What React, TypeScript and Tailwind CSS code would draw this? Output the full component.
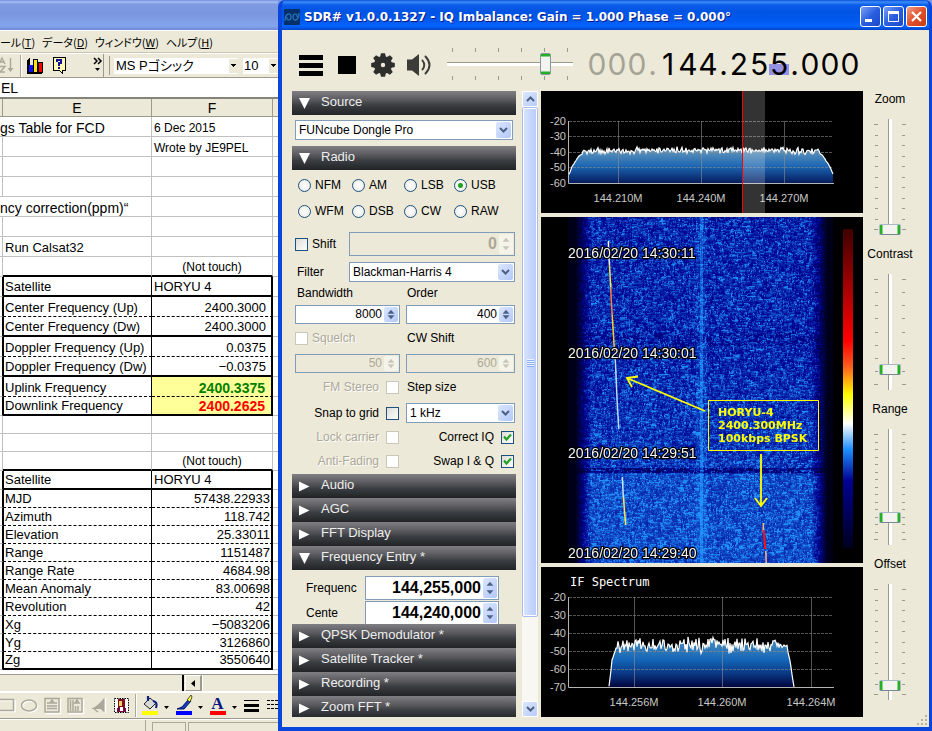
import { useEffect, useRef } from "react";
import type { ReactNode } from "react";

/* ---------- shared helpers ---------- */

function makeRandom(seed: number) {
  let s = seed;
  return () => {
    s = (s * 1664525 + 1013904223) % 4294967296;
    return s / 4294967296;
  };
}

const uiFont = "font-['Liberation_Sans','Noto_Sans_CJK_JP',sans-serif]";

/* ---------- spreadsheet ---------- */

type Row = {
  h: "h20" | "h18" | "h19";
  spill?: string;
  e?: string;
  f?: string;
  fStyle?: string;
  box?: boolean;
  line: "gray" | "thick" | "dash";
};

const small = "text-[12px] pl-[2px]";
const right = "text-right pr-[5px]";
const rightEdge = "text-right pr-[1px]";

const rows: Row[] = [
  { h: "h20", spill: "gs Table for FCD", f: "6 Dec 2015", fStyle: small, line: "gray" },
  { h: "h20", f: "Wrote by JE9PEL", fStyle: small, line: "gray" },
  { h: "h20", line: "gray" },
  { h: "h20", line: "gray" },
  { h: "h20", spill: "ncy correction(ppm)“", line: "gray" },
  { h: "h20", line: "gray" },
  { h: "h20", e: "Run Calsat32", line: "gray" },
  { h: "h20", f: "(Not touch)", fStyle: "text-[12px] text-center", line: "thick" },
  { h: "h20", e: "Satellite", f: "HORYU 4", box: true, line: "thick" },
  { h: "h20", e: "Center Frequency (Up)", f: "2400.3000", fStyle: right, box: true, line: "dash" },
  { h: "h20", e: "Center Frequency (Dw)", f: "2400.3000", fStyle: right, box: true, line: "thick" },
  { h: "h20", e: "Doppler Frequency (Up)", f: "0.0375", fStyle: right, box: true, line: "dash" },
  { h: "h20", e: "Doppler Frequency (Dw)", f: "−0.0375", fStyle: right, box: true, line: "thick" },
  { h: "h20", e: "Uplink Frequency", f: "2400.3375", fStyle: "text-right pr-[6px] font-bold text-[14px] text-[#008000] bg-[#ffff99]", box: true, line: "dash" },
  { h: "h19", e: "Downlink Frequency", f: "2400.2625", fStyle: "text-right pr-[6px] font-bold text-[14px] text-[#ff0000] bg-[#ffff99]", box: true, line: "thick" },
  { h: "h18", line: "gray" },
  { h: "h18", line: "gray" },
  { h: "h19", f: "(Not touch)", fStyle: "text-[12px] text-center", line: "thick" },
  { h: "h19", e: "Satellite", f: "HORYU 4", box: true, line: "thick" },
  { h: "h18", e: "MJD", f: "57438.22933", fStyle: rightEdge, box: true, line: "dash" },
  { h: "h18", e: "Azimuth", f: "118.742", fStyle: rightEdge, box: true, line: "dash" },
  { h: "h18", e: "Elevation", f: "25.33011", fStyle: rightEdge, box: true, line: "dash" },
  { h: "h18", e: "Range", f: "1151487", fStyle: rightEdge, box: true, line: "dash" },
  { h: "h18", e: "Range Rate", f: "4684.98", fStyle: rightEdge, box: true, line: "dash" },
  { h: "h18", e: "Mean Anomaly", f: "83.00698", fStyle: rightEdge, box: true, line: "dash" },
  { h: "h18", e: "Revolution", f: "42", fStyle: rightEdge, box: true, line: "dash" },
  { h: "h18", e: "Xg", f: "−5083206", fStyle: rightEdge, box: true, line: "dash" },
  { h: "h18", e: "Yg", f: "3126860", fStyle: rightEdge, box: true, line: "dash" },
  { h: "h18", e: "Zg", f: "3550640", fStyle: rightEdge, box: true, line: "thick" },
];

const heights = { h20: "h-[20px]", h19: "h-[19px]", h18: "h-[18px]" };
const lines = {
  gray: "border-b border-b-[#c0c0c0]",
  thick: "border-b-2 border-b-black",
  dash: "border-b border-dashed border-b-black",
};

function Sheet() {
  return (
    <table className="w-full table-fixed border-separate border-spacing-0 bg-white text-[13px] leading-[16px] text-black">
      <colgroup>
        <col className="w-[3px]" />
        <col className="w-[149px]" />
        <col className="w-[121px]" />
        <col />
      </colgroup>
      <thead>
        <tr className="h-[18px] bg-[#ece9d8]">
          <th className="h-[18px] border-r border-b border-[#9c9a8c] p-0" />
          <th className="border-r border-b border-[#9c9a8c] p-0 text-[14px] font-normal">E</th>
          <th className="border-r border-b border-[#9c9a8c] p-0 text-[14px] font-normal">F</th>
          <th className="border-b border-[#9c9a8c] p-0" />
        </tr>
      </thead>
      <tbody>
        {rows.map((r, i) => (
          <tr key={i}>
            <td
              className={`border-b border-b-[#c0c0c0] p-0 align-bottom whitespace-nowrap ${heights[r.h]} ${
                r.spill ? "text-[14px]" : r.box ? "border-r border-r-black" : "border-r border-r-[#c0c0c0]"
              }`}
            >
              {r.spill}
            </td>
            <td
              className={`p-0 align-bottom whitespace-nowrap ${r.box ? "border-l border-l-black pl-px [border-left-style:solid]" : "pl-[2px]"} border-r [border-right-style:solid] ${
                r.box ? "border-r-black" : "border-r-[#c0c0c0]"
              } ${lines[r.line]}`}
            >
              {r.e}
            </td>
            <td
              className={`p-0 align-bottom whitespace-nowrap [border-right-style:solid] ${
                r.box ? "border-r-2 border-r-black" : "border-r border-r-[#c0c0c0]"
              } ${lines[r.line]} ${r.fStyle ?? "pl-[2px]"}`}
            >
              {r.f}
            </td>
            <td className="border-b border-b-[#c0c0c0] p-0" />
          </tr>
        ))}
      </tbody>
    </table>
  );
}

function DownArrow() {
  return (
    <svg width="7" height="4" viewBox="0 0 7 4" shapeRendering="crispEdges" aria-hidden>
      <path d="M1 0h5v1h-1v1h-1v1h-1v-1h-1v-1h-1z" />
    </svg>
  );
}

function Spreadsheet() {
  return (
    <section className="flex w-[278px] shrink-0 flex-col overflow-hidden bg-[#ece9d8]">
      <div className="h-[31px] shrink-0 border-b border-white bg-[linear-gradient(#6f8ee0_0px,#a9bff2_2px,#7f9ae3_4px,#7a96df_14px,#83a4ec_26px,#6e86d6_30px)]" />
      <nav className="flex h-[22px] shrink-0 items-center gap-[7px] border-b border-[#c8c5b2] text-[11px] leading-[20px] whitespace-nowrap [font-feature-settings:'palt'] font-['Noto_Sans_CJK_JP',sans-serif]">
        <button>ール(<u>T</u>)</button>
        <button>データ(<u>D</u>)</button>
        <button>ウィンドウ(<u>W</u>)</button>
        <button>ヘルプ(<u>H</u>)</button>
      </nav>
      <div className="flex h-[25px] shrink-0 items-center border-t border-b border-t-white border-b-[#9c9a8c] text-[13px]">
        <svg width="103" height="23" viewBox="0 0 103 23" aria-hidden>
          <g stroke="#aca899" fill="none" strokeWidth="1.4">
            <path d="M-1 10 2 4l3 6M0 8h4M0 12.500h5l-5 5.500h5" />
            <path d="M10.500 4v13" />
            <path d="M7.500 14h6l-3 4z" fill="#aca899" stroke="none" />
          </g>
          <path d="M20.500 1v22" stroke="#aca899" />
          <path d="M21.500 1v22" stroke="#fff" />
          <g shapeRendering="crispEdges">
            <path d="M27 6l3-3v15h13l-2 2H27z" fill="#000" />
            <path d="M29 11h4v7h-4z" fill="#1010ff" />
            <path d="M33 5h4v13h-4z" fill="#ffe800" stroke="#000" />
            <path d="M38 8h4v10h-4z" fill="#f00" stroke="#000" />
            <path d="M53 3h12v13h-3v3l-3-3h-6z" fill="#fffbb0" stroke="#000" />
            <path d="M57 8V6h4v3h-2v3M59 13v2" stroke="#1010a0" strokeWidth="2" fill="none" />
          </g>
          <path d="M94 4l3 3-3 3M98 4l3 3-3 3" stroke="#000" strokeWidth="1.500" fill="none" />
          <path d="M95 14h5l-2.500 3z" fill="#000" />
        </svg>
        <div className="h-full w-[6px] border-l border-[#9c9a8c]" />
        <div className="mr-[4px] h-[19px] w-px bg-[#9c9a8c]" />
        <label className="flex h-[16px] w-[124px] items-center bg-white pl-[2px]">
          <input aria-label="Font" defaultValue="MS Pゴシック" className="min-w-0 flex-1 leading-[14px] outline-none [font-feature-settings:'palt'] font-['Liberation_Sans','Noto_Sans_CJK_JP',sans-serif]" />
          <span className="flex h-[14px] w-[9px] items-center justify-center bg-[#ece9d8]"><DownArrow /></span>
        </label>
        <label className="ml-[5px] flex h-[16px] flex-1 items-center bg-white pl-[1px]">
          <input aria-label="Font size" defaultValue="10" className="w-0 min-w-0 flex-1 leading-[14px] outline-none" />
          <span className="flex h-[14px] w-[9px] items-center justify-center bg-[#ece9d8]"><DownArrow /></span>
        </label>
      </div>
      <input aria-label="Formula" defaultValue="EL" className="h-[19px] shrink-0 bg-white px-px text-[14px] leading-[18px] outline-none" />
      <div className="h-[2px] shrink-0 bg-[#85837a]" />
      <div className="flex-1 bg-white">
        <Sheet />
      </div>
      <div className="flex h-[17px] shrink-0 border-t border-[#9c9a8c]">
        <div className="mr-px w-[184px] border-r-2 border-black" />
        <button aria-label="Scroll left" className="flex w-[17px] items-center justify-center border border-r-2 border-[#9c9a8c] border-t-white border-l-white">
          <svg width="4" height="7" viewBox="0 0 4 7" aria-hidden><path d="M4 0v7L0 3.500z" /></svg>
        </button>
        <div className="flex-1 border-l border-white" />
      </div>
      <div className="h-[28px] shrink-0 border-t-2 border-b border-t-white border-b-[#9c9a8c]">
        <svg width="278" height="26" viewBox="0 0 278 26" aria-hidden>
          <g fill="none" stroke="#fff" strokeWidth="1.500">
            <path d="M-1 7.500h16v11h-16z" />
            <ellipse cx="30" cy="13.500" rx="7.500" ry="5.500" />
            <path d="M60.500 6v14.500h-15M83.500 6v14.500h-15M105.500 5v15" />
          </g>
          <g fill="none" stroke="#aca899" strokeWidth="1.500">
            <path d="M-2 6.500h15.500v11h-15.500z" />
            <ellipse cx="29" cy="12.500" rx="7.500" ry="5.500" />
            <path d="M45 5.500h14v13.500h-14zM47 13h10M47 15.500h10M47 10h3M54 10h3M50 10l2-3 2 3z" />
            <path d="M68 5.500h14v13.500h-14zM70.500 7v11M73 7v11M75.500 13v5M78 13v5M75 10l2-3 2 3z" />
            <path d="M104.500 5v14.500l-4-3.500H91q7-3 13-11z" fill="#aca899" stroke="none" />
            <path d="M94 16l4 3" />
          </g>
          <path d="M114.500 5.500h14v14h-14z" fill="#fff" stroke="#000" strokeDasharray="1.500 1" />
          <path d="M118 6h7v9h-7z" fill="#7a1020" />
          <path d="M119 8h3v5h-3z" fill="#f0d060" />
          <path d="M117 15h9v4h-9z" fill="#700a40" />
          <path d="M120 14h3v4h-3z" fill="#fff" />
          <path d="M135.500 1v23" stroke="#aca899" /><path d="M136.500 1v23" stroke="#fff" />
          <path d="M144 11l6-6 6 5-6 6z" fill="#d8d8d8" stroke="#222" />
          <path d="M148 3v5M153 8q5 1 3 7" stroke="#102080" strokeWidth="2.200" fill="none" />
          <path d="M142 18h16v4h-16z" fill="#ffff00" />
          <path d="M177 16l5-2 6-7 3 1-7 8z" fill="#1040c0" stroke="#001060" />
          <path d="M187 7l4-5 1 2-2 5z" fill="#ffff40" stroke="#222" strokeWidth=".8" />
          <path d="M176 18h16v4h-16z" fill="#0000ff" />
          <text x="217.500" y="16" textAnchor="middle" fill="#0a1480" fontSize="17" fontWeight="700" fontFamily="Liberation Serif, serif">A</text>
          <path d="M210 18h16v4h-16z" fill="#ff0000" />
          <path d="M164 13h5l-2.500 3zM198 13h5l-2.500 3zM232 13h5l-2.500 3z" />
          <path d="M244 7h15v1h-15zM244 11h15v3h-15zM244 16h15v3h-15z" />
          <path d="M267 7.500h11M267 11.500h11M267 15.500h11" stroke="#000" strokeDasharray="3 1" />
        </svg>
      </div>
      <div className="flex h-[12px] shrink-0 gap-[6px] border-t border-white">
        <div className="w-[146px] border-r border-[#aca899]" />
        <div className="mt-[2px] w-[34px] border border-b-0 border-[#aca899]" />
        <div className="mt-[2px] -ml-[4px] flex-1 border border-r-0 border-b-0 border-[#aca899]" />
      </div>
    </section>
  );
}

/* ---------- receiver controls ---------- */

const ink = "text-black";
const dim = "text-[#aca899] [text-shadow:1px_1px_0_#ffffff]";

function Header({ title, open }: { title: string; open?: boolean }) {
  return (
    <button className="flex h-[24px] w-full shrink-0 items-center bg-[linear-gradient(#808084,#5c5c60_35%,#3a3d41_60%,#222427)] pb-[2px] pl-[7px] text-left text-[13px] text-[#eeeeee]">
      <svg width="11" height="11" viewBox="0 0 11 11" className="mt-[2px] mr-[11px]" aria-hidden>
        <path d={open ? "M0 0h11L5.500 11z" : "M0 0.500 10.500 5.500 0 10.500z"} fill="#fff" />
      </svg>
      {title}
    </button>
  );
}

function Select({ label, value }: { label: string; value: string }) {
  return (
    <div className="relative h-[20px] w-full">
      <select aria-label={label} className="block h-full w-full appearance-none border border-[#7f9db9] bg-white pl-[3px] text-[12px] text-black outline-none">
        <option>{value}</option>
      </select>
      <span className="pointer-events-none absolute top-[2px] right-[2px] bottom-[2px] flex w-[15px] items-center justify-center rounded-[2px] bg-[linear-gradient(135deg,#dbe6fe,#b3c8f8)]">
        <svg width="9" height="6" viewBox="0 0 9 6" aria-hidden><path d="M1 1l3.500 3.500L8 1" fill="none" stroke="#4d6185" strokeWidth="2" /></svg>
      </span>
    </div>
  );
}

function Spin({ label, value, size, disabled }: { label: string; value: string; size: "sm" | "lg"; disabled?: boolean }) {
  const box = size === "sm" ? "h-[19px]" : "h-[24px]";
  const text = size === "sm" ? "text-[12px]" : "text-[16px] font-bold";
  const arrow = disabled ? "#c9c7ba" : "#4d6185";
  const face = disabled ? "bg-[#f5f4ea]" : "bg-[linear-gradient(135deg,#dbe6fe,#b3c8f8)]";
  return (
    <div className={`flex w-full border border-[#7f9db9] p-px ${box} ${disabled ? "bg-[#ece9d8]" : "bg-white"}`}>
      <input
        aria-label={label}
        defaultValue={value}
        disabled={disabled}
        className={`w-0 min-w-0 flex-1 pr-[2px] pb-px text-right outline-none ${text} ${disabled ? "text-[#aca899]" : "text-black"}`}
      />
      <span className={`flex w-[14px] flex-col rounded-[2px] py-px ${face}`}>
        {["M0.500 4 3.500 0.500 6.500 4z", "M0.500 0 3.500 3.500 6.500 0z"].map((d, i) => (
          <button key={i} aria-label={i ? `${label} down` : `${label} up`} disabled={disabled} className="flex flex-1 items-center justify-center">
            <svg width="8" height="5" viewBox="0 0 7 4" aria-hidden><path d={d} fill={arrow} /></svg>
          </button>
        ))}
      </span>
    </div>
  );
}

function Check({ label, checked, disabled, left }: { label: string; checked?: boolean; disabled?: boolean; left?: boolean }) {
  const box = (
    <span className="relative flex h-[13px] w-[13px] shrink-0">
      <input
        type="checkbox"
        defaultChecked={checked}
        disabled={disabled}
        className={`h-full w-full appearance-none border ${disabled ? "border-[#cac8bb] bg-white" : "border-[#1c5180] bg-[linear-gradient(135deg,#dcdcd7,#ffffff)]"}`}
      />
      {checked && (
        <svg width="9" height="9" viewBox="0 0 9 9" className="pointer-events-none absolute top-[2px] left-[2px]" aria-hidden>
          <path d="M1 3.500 3.500 6.500 8 1.500" fill="none" stroke="#21a121" strokeWidth="2.200" />
        </svg>
      )}
    </span>
  );
  return (
    <label className={`flex h-[20px] w-full items-center text-[12px] whitespace-nowrap ${left ? "gap-[4px]" : "justify-end gap-[7px] pr-px"} ${disabled ? dim : ink}`}>
      {left ? <>{box}{label}</> : <>{label}{box}</>}
    </label>
  );
}

function Mode({ label, checked }: { label: string; checked?: boolean }) {
  return (
    <label className="flex h-[26px] items-center gap-[4px] text-[12px]">
      <input
        type="radio"
        name="mode"
        defaultChecked={checked}
        className="h-[13px] w-[13px] shrink-0 appearance-none rounded-full border border-[#1c5180] bg-[radial-gradient(#ffffff,#e6e6e0)] checked:bg-[radial-gradient(circle,#21a121_0_2px,#f4f4ef_3px)]"
      />
      {label}
    </label>
  );
}

function Pair({ className, children }: { className: string; children: ReactNode }) {
  return <div className={`grid grid-cols-[105px_1fr] items-center gap-x-[6px] ${className}`}>{children}</div>;
}

function ControlPanel() {
  return (
    <div className="flex w-[224px] shrink-0 flex-col overflow-hidden">
      <Header title="Source" open />
      <div className="shrink-0 px-[3px] pt-[5px] pb-[6px]"><Select label="Source" value="FUNcube Dongle Pro" /></div>
      <Header title="Radio" open />
      <div className="shrink-0 pt-[2px] pr-px pb-[3px] pl-[3px] text-[12px]">
        <div className="grid grid-cols-[54px_52px_50px_1fr] pl-[3px]">
          <Mode label="NFM" /><Mode label="AM" /><Mode label="LSB" /><Mode label="USB" checked />
          <Mode label="WFM" /><Mode label="DSB" /><Mode label="CW" /><Mode label="RAW" />
        </div>
        <div className="mt-[8px] grid grid-cols-[54px_1fr] items-center gap-y-[6px]">
          <Check label="Shift" left />
          <Spin label="Shift amount" value="0" size="lg" disabled />
          <span className="pl-[2px]">Filter</span>
          <Select label="Filter" value="Blackman-Harris 4" />
        </div>
        <Pair className="mt-px h-[20px]"><span className="pl-[2px]">Bandwidth</span><span className="pl-px">Order</span></Pair>
        <Pair className="mt-[2px]"><Spin label="Bandwidth" value="8000" size="sm" /><Spin label="Order" value="400" size="sm" /></Pair>
        <Pair className="mt-[4px]"><Check label="Squelch" left disabled /><span className="pl-px">CW Shift</span></Pair>
        <Pair className="mt-[6px]"><Spin label="Squelch level" value="50" size="sm" disabled /><Spin label="CW Shift" value="600" size="sm" disabled /></Pair>
        <Pair className="mt-[4px]"><Check label="FM Stereo" disabled /><span className="pl-px">Step size</span></Pair>
        <Pair className="mt-[6px]"><Check label="Snap to grid" /><Select label="Step size" value="1 kHz" /></Pair>
        <Pair className="mt-[4px]"><Check label="Lock carrier" disabled /><Check label="Correct IQ" checked /></Pair>
        <Pair className="mt-[4px]"><Check label="Anti-Fading" disabled /><Check label="Swap I & Q" checked /></Pair>
      </div>
      <Header title="Audio" />
      <Header title="AGC" />
      <Header title="FFT Display" />
      <Header title="Frequency Entry *" open />
      <div className="h-[54px] shrink-0 overflow-hidden pt-[6px] pr-[17px] pl-[14px] text-[12px]">
        <div className="grid grid-cols-[59px_1fr] items-center gap-y-px">
          <span>Frequenc</span><Spin label="Frequency" value="144,255,000" size="lg" />
          <span>Cente</span><Spin label="Center" value="144,240,000" size="lg" />
        </div>
      </div>
      <Header title="QPSK Demodulator *" />
      <Header title="Satellite Tracker *" />
      <Header title="Recording *" />
      <Header title="Zoom FFT *" />
    </div>
  );
}

function ScrollBar() {
  const cap = "flex h-[16px] shrink-0 items-center justify-center rounded-[2px] border border-white bg-[linear-gradient(135deg,#dbe6fe,#b8cbf8)]";
  return (
    <div className="ml-[6px] flex w-[16px] shrink-0 flex-col bg-[#f8f7f2]">
      <button aria-label="Scroll up" className={cap}>
        <svg width="9" height="6" viewBox="0 0 9 6" aria-hidden><path d="M1 5l3.500-3.500L8 5" fill="none" stroke="#4d6185" strokeWidth="2" /></svg>
      </button>
      <div className="flex h-[510px] shrink flex-col items-center justify-center gap-px rounded-[2px] border border-[#a8bdee] bg-[linear-gradient(90deg,#dbe6fe,#c8d6fb_50%,#b8cbf8)] [box-shadow:inset_0_0_0_1px_#ffffff]">
        {[0, 1, 2, 3].map((i) => <span key={i} className="h-px w-[7px] bg-[#eef4fe] [box-shadow:0_1px_0_#8cb0f8]" />)}
      </div>
      <div className="flex-1" />
      <button aria-label="Scroll down" className={cap}>
        <svg width="9" height="6" viewBox="0 0 9 6" aria-hidden><path d="M1 1l3.500 3.500L8 1" fill="none" stroke="#4d6185" strokeWidth="2" /></svg>
      </button>
    </div>
  );
}

/* ---------- sliders ---------- */

function VTicks({ count, side }: { count: number; side: "left" | "right" }) {
  return (
    <div className={`flex w-[5px] flex-col justify-between py-[5px] ${side === "left" ? "items-start" : "items-end"}`}>
      {Array.from({ length: count }, (_, i) => (
        <span key={i} className={`h-px bg-[#9c9a8c] ${i === 0 || i === count - 1 ? "w-[4px]" : side === "left" ? "ml-px w-[3px]" : "mr-px w-[3px]"}`} />
      ))}
    </div>
  );
}

function VSlider({ label, value, ticks }: { label: string; value: number; ticks: number }) {
  return (
    <label className="flex h-[155px] w-full shrink-0 flex-col items-center pr-[12px] text-[12px]">
      <span className="h-[16px] leading-[16px]">{label}</span>
      <span className="mt-[12px] flex h-[116px]">
        <VTicks count={ticks} side="left" />
        <input
          type="range"
          defaultValue={value}
          className="h-[116px] w-[22px] appearance-none bg-transparent [direction:rtl] [writing-mode:vertical-lr] [&::-webkit-slider-runnable-track]:h-full [&::-webkit-slider-runnable-track]:w-full [&::-webkit-slider-runnable-track]:bg-[linear-gradient(90deg,transparent_9px,#9c9a8c_9px_10px,#ffffff_10px_13px,transparent_13px)] [&::-webkit-slider-thumb]:h-[11px] [&::-webkit-slider-thumb]:w-[22px] [&::-webkit-slider-thumb]:appearance-none [&::-webkit-slider-thumb]:rounded-[2px] [&::-webkit-slider-thumb]:border [&::-webkit-slider-thumb]:border-[#aab8c6] [&::-webkit-slider-thumb]:border-b-[#778892] [&::-webkit-slider-thumb]:bg-[linear-gradient(90deg,#21b121_2px,#f3f3ef_3px_17px,#21b121_18px)]"
        />
        <VTicks count={ticks} side="right" />
      </span>
    </label>
  );
}

function HTicks() {
  return (
    <div className="flex justify-between px-[5px]">
      {[0, 1, 2, 3, 4, 5].map((i) => <span key={i} className="h-[4px] w-px bg-[#9c9a8c]" />)}
    </div>
  );
}

function VolumeSlider() {
  return (
    <div className="flex w-[126px] flex-col">
      <HTicks />
      <input
        type="range"
        aria-label="Volume"
        defaultValue={81}
        className="my-px h-[22px] w-full appearance-none bg-transparent [&::-webkit-slider-runnable-track]:h-[22px] [&::-webkit-slider-runnable-track]:bg-[linear-gradient(transparent_9px,#9c9a8c_9px_10px,#ffffff_10px_13px,transparent_13px)] [&::-webkit-slider-thumb]:h-[22px] [&::-webkit-slider-thumb]:w-[11px] [&::-webkit-slider-thumb]:appearance-none [&::-webkit-slider-thumb]:rounded-[2px] [&::-webkit-slider-thumb]:border [&::-webkit-slider-thumb]:border-[#8897a4] [&::-webkit-slider-thumb]:bg-[linear-gradient(#21b121_2px,#f3f3ef_3px_17px,#21b121_18px)]"
      />
      <HTicks />
    </div>
  );
}

/* ---------- displays ---------- */

function noisyCurve(seed: number, pts: [number, number][], from: number, to: number, amp: number) {
  const rnd = makeRandom(seed);
  const out: string[] = [];
  for (let x = pts[0][0]; x <= pts[pts.length - 1][0]; x += 1) {
    const k = Math.max(1, pts.findIndex((p) => p[0] >= x));
    const [x0, y0] = pts[k - 1];
    const [x1, y1] = pts[k];
    const base = y0 + ((y1 - y0) * (x - x0)) / (x1 - x0);
    const n = (rnd() + rnd() - 1) * (x > from && x < to ? amp : amp / 5);
    out.push(`${x},${(base + n).toFixed(1)}`);
  }
  return out;
}

type Plot = {
  height: string;
  h: number;
  levels: [string, number][];
  freqs: [string, number][];
  labelY: number;
  curve: string[];
  id: string;
  stops: [number, string][];
  children?: ReactNode;
};

function SpectrumPlot({ height, h, levels, freqs, labelY, curve, id, stops, children }: Plot) {
  const top = levels[0][1];
  const bottom = levels[levels.length - 1][1];
  const first = curve[0].split(",")[0];
  const last = curve[curve.length - 1].split(",")[0];
  return (
    <div className={`shrink-0 bg-black ${height}`}>
      <svg className="h-full w-full" viewBox={`0 0 322 ${h}`} role="img" aria-label={id}>
        <defs>
          <linearGradient id={id} gradientUnits="userSpaceOnUse" x1="0" x2="0" y1={bottom - 42} y2={bottom}>
            {stops.map(([o, c]) => <stop key={o} offset={o} stopColor={c} />)}
          </linearGradient>
        </defs>
        <polygon points={`${first},${bottom} ${curve.join(" ")} ${last},${bottom}`} fill={`url(#${id})`} />
        <g stroke="#8c8c8c" strokeOpacity=".6" shapeRendering="crispEdges">
          {levels.slice(0, -1).map(([t, y]) => <line key={t} x1="28" x2="292" y1={y + 0.5} y2={y + 0.5} strokeDasharray="3 1" />)}
          {freqs.map(([t, x]) => <line key={t} x1={x + 0.5} x2={x + 0.5} y1={top} y2={bottom} />)}
        </g>
        <path d={`M27.500 ${top}V${bottom + 0.5}H293`} fill="none" stroke="#b4b4b4" />
        <polyline points={curve.join(" ")} fill="none" stroke="#fff" strokeWidth="1.200" />
        <g fill="#c8c8c8" fontSize="11" fontFamily="Liberation Sans, sans-serif">
          {levels.map(([t, y]) => <text key={t} x="25" y={y + 4} textAnchor="end">{t}</text>)}
          {freqs.map(([t, x]) => <text key={t} x={x} y={labelY} textAnchor="middle">{t}</text>)}
        </g>
        {children}
      </svg>
    </div>
  );
}

const mainCurve = noisyCurve(7, [[28, 83], [32, 74], [37, 66], [43, 61], [55, 60], [160, 59], [276, 60], [282, 65], [288, 74], [292, 83]], 40, 280, 4);
const ifCurve = noisyCurve(23, [[68, 120], [71, 93], [75, 82], [80, 79], [160, 78], [246, 79], [249, 94], [253, 120]], 76, 246, 9);

function Waterfall() {
  const ref = useRef<HTMLCanvasElement>(null);
  useEffect(() => {
    const ctx = ref.current?.getContext("2d");
    if (!ctx) return;
    const w = 322;
    const h = 346;
    const img = ctx.createImageData(w, h);
    const rnd = makeRandom(99);
    const column = new Float32Array(w);
    for (let y = 0; y < h; y += 1) {
      const dark = Math.abs(y - 253) < 3 ? 0.2 : Math.abs(y - 122) < 7 ? 0.05 : 0;
      const lift = y > 256 ? 0.14 : y > 130 ? 0.06 * ((y - 130) / 120) : 0;
      let hold = 0;
      for (let x = 0; x < w; x += 1) {
        const i = (y * w + x) * 4;
        if (rnd() > 0.4) hold = rnd() * rnd();
        column[x] = column[x] * 0.35 + hold * 0.65;
        let v = 0;
        if (x >= 27 && x < 292) {
          const edge = Math.max(0, Math.min(1, (x - 34) / 16, (286 - x) / 16));
          const mid = Math.abs(x - 160) < 2 ? 0.26 : Math.abs(x - 160) < 6 ? 0.07 : 0;
          v = edge * (0.25 + column[x] * 0.78 + mid + lift - dark) + 0.06;
        }
        const a = Math.min(1, v / 0.36);
        const b = Math.min(1, Math.max(0, (v - 0.36) / 0.5));
        img.data[i] = b * 34;
        img.data[i + 1] = a * 4 + b * 140;
        img.data[i + 2] = a * 145 + b * 105;
        img.data[i + 3] = 255;
      }
    }
    ctx.putImageData(img, 0, 0);
  }, []);

  return (
    <div className="relative min-h-0 flex-1 overflow-hidden bg-black">
      <canvas ref={ref} width={322} height={346} className="absolute inset-0 h-full w-full" />
      <svg className="absolute inset-0 h-full w-full" viewBox="0 0 322 346" role="img" aria-label="Waterfall">
        <defs>
          <linearGradient id="heat" x1="0" x2="0" y1="0" y2="1">
            <stop offset="0" stopColor="#400000" />
            <stop offset=".35" stopColor="#ff0000" />
            <stop offset=".43" stopColor="#ff5a1e" />
            <stop offset=".52" stopColor="#ffff00" />
            <stop offset=".61" stopColor="#ffffff" />
            <stop offset=".69" stopColor="#1e90ff" />
            <stop offset=".79" stopColor="#000091" />
            <stop offset="1" stopColor="#000020" />
          </linearGradient>
        </defs>
        <rect x="302" y="12" width="10" height="319" fill="url(#heat)" />
        <g fill="none" strokeWidth="1.500">
          <path d="M67.500 24v10l1 14" stroke="#f0f4ff" />
          <path d="M68.500 48l.5 10 .7 12" stroke="#ffe040" />
          <path d="M69.700 70l.5 12 1 16" stroke="#ff8040" />
          <path d="M71.200 98l1 16 1.300 20" stroke="#ffc820" />
          <path d="M74.300 142l1.200 28 .8 18 1.500 24" stroke="#b8dcff" />
          <path d="M81.300 260l1 20" stroke="#c8e4ff" />
          <path d="M82.500 280l.8 12 1.400 16" stroke="#ffe850" />
          <path d="M222.300 306v8M224.700 334l.6 12" stroke="#ffb080" />
          <path d="M222.700 313l1.600 19" stroke="#ff1010" strokeWidth="2" />
        </g>
        <g fill="#f4f4f4" stroke="#000" strokeWidth="2.400" strokeLinejoin="round" paintOrder="stroke" fontSize="14" fontFamily="Liberation Sans, sans-serif">
          <text x="27" y="41">2016/02/20 14:30:11</text>
          <text x="27" y="141">2016/02/20 14:30:01</text>
          <text x="27" y="241">2016/02/20 14:29:51</text>
          <text x="27" y="341">2016/02/20 14:29:40</text>
        </g>
        <g fill="none" stroke="#ffff00" strokeWidth="1.800">
          <path d="M164 194 86 161M97 159.500 86 161l5 9" />
          <path d="M220 237v52M214 281l6 8 6-8" />
          <path d="M167.500 183.500h110v50h-110z" strokeWidth="1" />
        </g>
        <g fill="#ffff00" fontSize="11" fontWeight="700" fontFamily="DejaVu Sans, sans-serif">
          <text x="177" y="199">HORYU-4</text>
          <text x="177" y="212">2400.300MHz</text>
          <text x="177" y="225">100kbps BPSK</text>
        </g>
      </svg>
    </div>
  );
}

function Displays() {
  return (
    <div className="ml-[3px] flex min-w-0 flex-1 flex-col gap-[4px]">
      <SpectrumPlot
        id="spectrum"
        height="h-[122px]"
        h={122}
        levels={[["-20", 30], ["-30", 45], ["-40", 61], ["-50", 76], ["-60", 92]]}
        freqs={[["144.210M", 77], ["144.240M", 160], ["144.270M", 243]]}
        labelY={111}
        curve={mainCurve}
        stops={[[0, "#7aa0b8"], [0.25, "#5a90b8"], [0.6, "#1c66b4"], [1, "#051c5c"]]}
      >
        <rect x="202" y="0" width="22" height="122" fill="#fff" fillOpacity=".2" />
        <rect x="201" y="0" width="1" height="122" fill="#f00" />
      </SpectrumPlot>
      <Waterfall />
      <SpectrumPlot
        id="if-spectrum"
        height="h-[150px]"
        h={150}
        levels={[["-20", 30], ["-30", 48], ["-40", 66], ["-50", 84], ["-60", 102], ["-70", 120]]}
        freqs={[["144.256M", 93], ["144.260M", 181], ["144.264M", 270]]}
        labelY={139}
        curve={ifCurve}
        stops={[[0, "#3c82ba"], [0.35, "#1466b8"], [0.7, "#0a3480"], [1, "#02043c"]]}
      >
        <text x="29" y="19" fill="#fff" fontSize="12" fontFamily="DejaVu Sans Mono, monospace">IF Spectrum</text>
      </SpectrumPlot>
    </div>
  );
}

/* ---------- receiver window ---------- */

const digits = "000.144.255.000".split("");

function Toolbar() {
  return (
    <div className="flex h-[61px] shrink-0 items-center pl-[17px]">
      <button aria-label="Menu" className="mt-[9px] w-[24px]">
        <svg width="24" height="21" viewBox="0 0 24 21" aria-hidden><path d="M0 0h24v5H0zM0 8h24v5H0zM0 16h24v5H0z" /></svg>
      </button>
      <button aria-label="Stop" className="mt-[9px] ml-[15px] h-[18px] w-[18px] bg-black" />
      <button aria-label="Settings" className="mt-[9px] ml-[15px]">
        <svg width="24" height="24" viewBox="-12 -12 24 24" fill="#2e2e2c" aria-hidden>
          <path fillRule="evenodd" d="M0-9A9 9 0 1 1 0 9 9 9 0 0 1 0-9zM0-2.200A2.200 2.200 0 1 0 0 2.200 2.200 2.200 0 0 0 0-2.200z" />
          {[0, 45, 90, 135, 180, 225, 270, 315].map((a) => <path key={a} d="M-3-7.500-2-11.800H2L3-7.500z" transform={`rotate(${a})`} />)}
        </svg>
      </button>
      <button aria-label="Mute" className="mt-[9px] ml-[12px]">
        <svg width="25" height="22" viewBox="0 0 25 22" fill="#3c3c38" aria-hidden>
          <path d="M0 5.500h5L12 0v22l-7-5.500H0z" />
          <path d="M15.500 6.500q3.500 4.500 0 9M18.500 2.500q8 8.500 0 17" fill="none" stroke="#3c3c38" strokeWidth="1.900" strokeLinecap="round" />
        </svg>
      </button>
      <div className="mt-[7px] ml-[15px]"><VolumeSlider /></div>
      <div className="mt-[7px] ml-[14px] flex h-[32px] text-[30px] leading-[32px] font-normal text-black font-['Inter',sans-serif]">
        {digits.map((d, i) => (
          <span
            key={i}
            className={`text-center ${d === "." ? "w-[11px]" : "w-[20px]"} ${i < 4 ? "text-[#a5a396]" : ""} ${
              i === 10 ? "bg-[linear-gradient(transparent_16px,#9490e4_16px_27px,transparent_27px)]" : ""
            }`}
          >
            {d}
          </span>
        ))}
      </div>
    </div>
  );
}

function TitleBar() {
  const btn = "flex h-[21px] w-[21px] items-center justify-center rounded-[3px] border border-white";
  const blue = "bg-[linear-gradient(135deg,#7ba0f4,#2a5fe0_50%,#1c48c8)]";
  return (
    <header className="flex h-[30px] shrink-0 items-center pt-[3px] pr-[2px] pl-[2px]">
      <svg width="16" height="16" viewBox="0 0 16 16" aria-hidden>
        <rect width="16" height="16" fill="#06306c" />
        <path d="M1 12c0-8 6-9 6-4 0 4-5 4-4 0M15 4c0 8-6 9-6 4 0-4 5-4 4 0" fill="none" stroke="#2a78c0" strokeWidth="1.200" />
      </svg>
      <h1 className="ml-[4px] flex-1 text-[12px] font-bold whitespace-nowrap text-white [text-shadow:1px_1px_0_#0a1883] font-['DejaVu_Sans',sans-serif]">
        SDR# v1.0.0.1327 - IQ Imbalance: Gain = 1.000 Phase = 0.000°
      </h1>
      <div className="flex gap-[2px]">
        <button aria-label="Minimize" className={`${btn} ${blue}`}>
          <svg width="13" height="13" viewBox="0 0 13 13" aria-hidden><path d="M1 9h7v3H1z" fill="#fff" /></svg>
        </button>
        <button aria-label="Maximize" className={`${btn} ${blue}`}>
          <svg width="13" height="13" viewBox="0 0 13 13" aria-hidden><path d="M1.500 1.500h10v10h-10z" fill="none" stroke="#fff" /><path d="M1 1h11v3H1z" fill="#fff" /></svg>
        </button>
        <button aria-label="Close" className={`${btn} bg-[linear-gradient(135deg,#f0a088,#e0502c_50%,#c43c14)]`}>
          <svg width="13" height="13" viewBox="0 0 13 13" aria-hidden><path d="M2 2l9 9M11 2l-9 9" stroke="#fff" strokeWidth="2.200" /></svg>
        </button>
      </div>
    </header>
  );
}

function Receiver() {
  return (
    <section className="flex min-w-0 flex-1 flex-col rounded-t-[7px] border-r-[3px] border-b-[4px] border-l-[4px] border-[#0a45dc] bg-[linear-gradient(#0a50d8_0px,#3c8cf8_2px,#0a5ce8_5px,#0054e3_12px,#0058ee_20px,#0466ff_26px,#0144c8_30px)] [background-origin:border-box]">
      <TitleBar />
      <main className="relative flex min-h-0 flex-1 flex-col bg-[#ece9d8] pb-[10px]">
        <Toolbar />
        <div className="flex min-h-0 flex-1 pl-[10px]">
          <ControlPanel />
          <ScrollBar />
          <Displays />
          <div className="flex w-[66px] shrink-0 flex-col">
            <VSlider label="Zoom" value={0} ticks={11} />
            <VSlider label="Contrast" value={14} ticks={9} />
            <VSlider label="Range" value={21} ticks={15} />
            <VSlider label="Offset" value={9} ticks={11} />
          </div>
        </div>
        <svg width="11" height="11" viewBox="0 0 11 11" className="absolute right-px bottom-px" aria-hidden>
          <path d="M8 0h2v2H8zM4 4h2v2H4zM8 4h2v2H8zM0 8h2v2H0zM4 8h2v2H4zM8 8h2v2H8z" fill="#b8b4a2" />
        </svg>
      </main>
    </section>
  );
}

export default function App() {
  return (
    <div className={`flex h-screen w-full overflow-hidden bg-[#7a96df] text-black ${uiFont}`}>
      <Spreadsheet />
      <Receiver />
    </div>
  );
}
